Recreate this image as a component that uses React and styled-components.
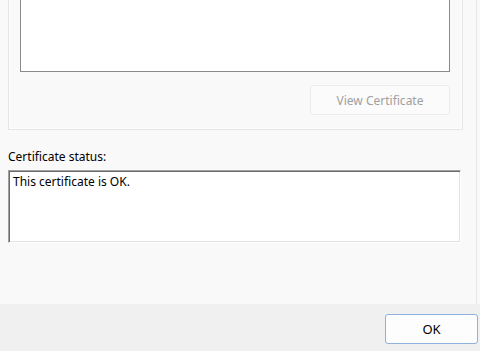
import React from "react";
import styled, { createGlobalStyle } from "styled-components";

const Global = createGlobalStyle`
  html, body { margin: 0; padding: 0; background: #f9f9f9; }
  body { font-family: "Noto Sans", "Open Sans", sans-serif; font-size: 12px; color: #000; }
`;

const Window = styled.div`
  width: 480px;
  height: 351px;
  display: flex;
  flex-direction: column;
  overflow: hidden;
`;

const Main = styled.div`
  height: 304px;
  display: flex;
`;

const Content = styled.div`
  width: 468px;
  padding: 0 13px 0 8px;
  border-right: 1px solid #e6e6e6;
  box-sizing: border-box;
  width: 477px;
  display: flex;
  flex-direction: column;
`;

const GroupBox = styled.div`
  height: 130px;
  box-sizing: border-box;
  border: 1px solid #e5e5e5;
  border-top: none;
  box-shadow: inset 1px 0 0 #fdfdfd, inset -1px -1px 0 #fdfdfd;
  padding: 0 12px 0 11px;
  display: flex;
  flex-direction: column;
  align-items: flex-end;
`;

const ListBox = styled.div`
  align-self: stretch;
  height: 72px;
  box-sizing: border-box;
  background: #fff;
  border: 1px solid #8a8a8a;
  border-top: none;
`;

const FlatButton = styled.button`
  margin-top: 13px;
  width: 140px;
  height: 30px;
  box-sizing: border-box;
  background: #fbfbfb;
  border: 1px solid #ececec;
  border-radius: 3px;
  color: ${(p) => (p.disabled ? "#a0a0a0" : "#000")};
  font: inherit;
  font-size: 12px;
  padding: 0;
`;

const Label = styled.div`
  margin-top: 17px;
  height: 20px;
  line-height: 20px;
`;

const StatusBox = styled.div`
  margin-top: 3px;
  width: 453px;
  height: 73px;
  box-sizing: border-box;
  background: #fff;
  border-style: solid;
  border-width: 1px;
  border-color: #a0a0a0 #ffffff #ffffff #a0a0a0;
  box-shadow: inset 1px 1px 0 #6b6b6b, inset -1px -1px 0 #e3e3e3;
  padding: 3px 4px;
  line-height: 16px;
`;

const Footer = styled.div`
  flex: 1;
  background: #f0f0f0;
  display: flex;
  justify-content: flex-end;
  align-items: flex-start;
  padding: 10px 2px 0 0;
`;

const DefaultButton = styled.button`
  width: 93px;
  height: 30px;
  box-sizing: border-box;
  background: #fdfdfd;
  border: 1px solid #8fb2dd;
  border-radius: 3px;
  font: inherit;
  font-size: 13px;
  color: #000;
  padding: 0;
`;

export default function App() {
  return (
    <>
      <Global />
      <Window>
        <Main>
          <Content>
            <GroupBox>
              <ListBox />
              <FlatButton disabled>View Certificate</FlatButton>
            </GroupBox>
            <Label>Certificate status:</Label>
            <StatusBox>This certificate is OK.</StatusBox>
          </Content>
        </Main>
        <Footer>
          <DefaultButton>OK</DefaultButton>
        </Footer>
      </Window>
    </>
  );
}
